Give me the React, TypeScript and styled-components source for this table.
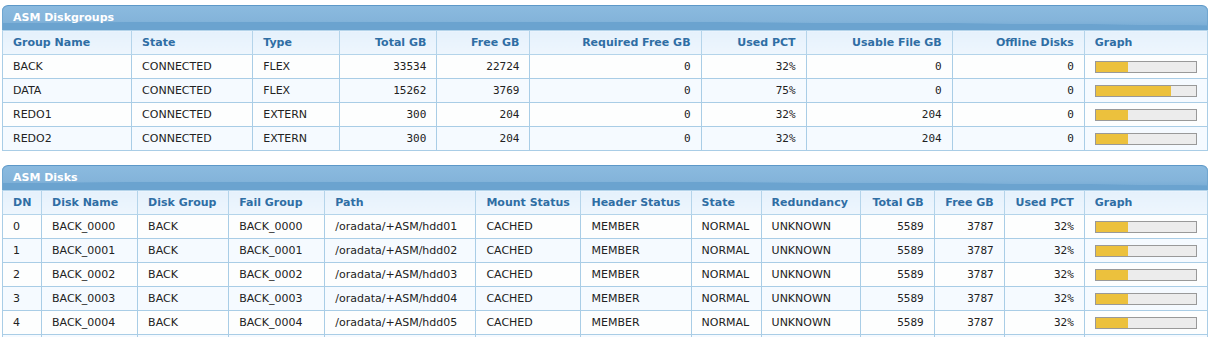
import React from "react";
import styled, { createGlobalStyle } from "styled-components";

const GlobalStyle = createGlobalStyle`
  body {
    margin: 0;
    padding: 5px 3px 0 2px;
    background: #ffffff;
    font-family: "DejaVu Sans", Verdana, sans-serif;
    font-size: 11px;
    color: #222222;
  }
`;

const Panel = styled.section`
  width: 1206px;
  margin-bottom: 14px;
`;

const PanelTitle = styled.div`
  height: 24px;
  border-top: 1px solid #5d98c8;
  border-radius: 6px 6px 0 0;
  background:
    radial-gradient(140% 60% at 35% 100%, #6ba3cf 0%, #6ba3cf 55%, rgba(107, 163, 207, 0) 57%),
    linear-gradient(180deg, #8bbadf 0%, #84b4da 60%, #72a8d2 100%);
  color: #ffffff;
  font-weight: bold;
  font-size: 11px;
  line-height: 24px;
  padding-left: 11px;
  box-shadow: inset 1px 0 0 #6fa6d0, inset -1px 0 0 #6fa6d0;
`;

const Table = styled.table`
  width: 100%;
  table-layout: fixed;
  border-collapse: collapse;
`;

const Head = styled.th<{ $right?: boolean }>`
  height: 23px;
  padding: 0 10px;
  border: 1px solid #b4d4ea;
  background: linear-gradient(180deg, #e5f1fc 0%, #eef6fd 100%);
  color: #2f6ea4;
  font-weight: bold;
  font-size: 11px;
  text-align: ${(p) => (p.$right ? "right" : "left")};
  white-space: nowrap;
  overflow: hidden;
`;

const Row = styled.tr`
  background: #fdfefe;
  &:nth-child(even) {
    background: #f5faff;
  }
`;

const Cell = styled.td<{ $num?: boolean }>`
  height: 23px;
  padding: 0 10px;
  border: 1px solid #a9cde6;
  text-align: ${(p) => (p.$num ? "right" : "left")};
  font-family: ${(p) =>
    p.$num ? '"DejaVu Sans Mono", "Liberation Mono", monospace' : "inherit"};
  font-size: 11px;
  color: #222222;
  white-space: nowrap;
  overflow: hidden;
`;

const Bar = styled.div`
  width: 100px;
  height: 10px;
  border: 1px solid #999999;
  background: #ececec;
`;

const BarFill = styled.div`
  height: 100%;
  background: #ecc13d;
`;

type Col = { label: string; width: number; num?: boolean; graph?: boolean };

const groupCols: Col[] = [
  { label: "Group Name", width: 129 },
  { label: "State", width: 121 },
  { label: "Type", width: 87 },
  { label: "Total GB", width: 97, num: true },
  { label: "Free GB", width: 93, num: true },
  { label: "Required Free GB", width: 171, num: true },
  { label: "Used PCT", width: 105, num: true },
  { label: "Usable File GB", width: 146, num: true },
  { label: "Offline Disks", width: 132, num: true },
  { label: "Graph", width: 123, graph: true },
];

const groupRows: (string | number)[][] = [
  ["BACK", "CONNECTED", "FLEX", "33534", "22724", "0", "32%", "0", "0", 32],
  ["DATA", "CONNECTED", "FLEX", "15262", "3769", "0", "75%", "0", "0", 75],
  ["REDO1", "CONNECTED", "EXTERN", "300", "204", "0", "32%", "204", "0", 32],
  ["REDO2", "CONNECTED", "EXTERN", "300", "204", "0", "32%", "204", "0", 32],
];

const diskCols: Col[] = [
  { label: "DN", width: 39 },
  { label: "Disk Name", width: 96 },
  { label: "Disk Group", width: 91 },
  { label: "Fail Group", width: 96 },
  { label: "Path", width: 151 },
  { label: "Mount Status", width: 105 },
  { label: "Header Status", width: 110 },
  { label: "State", width: 70 },
  { label: "Redundancy", width: 99 },
  { label: "Total GB", width: 74, num: true },
  { label: "Free GB", width: 70, num: true },
  { label: "Used PCT", width: 80, num: true },
  { label: "Graph", width: 123, graph: true },
];

const diskRows: (string | number)[][] = [0, 1, 2, 3, 4, 5].map((i) => [
  String(i),
  `BACK_000${i}`,
  "BACK",
  `BACK_000${i}`,
  `/oradata/+ASM/hdd0${i + 1}`,
  "CACHED",
  "MEMBER",
  "NORMAL",
  "UNKNOWN",
  "5589",
  "3787",
  "32%",
  32,
]);

function DataPanel({ title, cols, rows }: { title: string; cols: Col[]; rows: (string | number)[][] }) {
  return (
    <Panel>
      <PanelTitle>{title}</PanelTitle>
      <Table>
        <colgroup>
          {cols.map((c) => (
            <col key={c.label} style={{ width: c.width }} />
          ))}
        </colgroup>
        <thead>
          <tr>
            {cols.map((c) => (
              <Head key={c.label} $right={c.num}>
                {c.label}
              </Head>
            ))}
          </tr>
        </thead>
        <tbody>
          {rows.map((r, i) => (
            <Row key={i}>
              {cols.map((c, j) =>
                c.graph ? (
                  <Cell key={j}>
                    <Bar>
                      <BarFill style={{ width: `${r[j]}%` }} />
                    </Bar>
                  </Cell>
                ) : (
                  <Cell key={j} $num={c.num}>
                    {r[j]}
                  </Cell>
                )
              )}
            </Row>
          ))}
        </tbody>
      </Table>
    </Panel>
  );
}

export default function App() {
  return (
    <>
      <GlobalStyle />
      <DataPanel title="ASM Diskgroups" cols={groupCols} rows={groupRows} />
      <DataPanel title="ASM Disks" cols={diskCols} rows={diskRows} />
    </>
  );
}
